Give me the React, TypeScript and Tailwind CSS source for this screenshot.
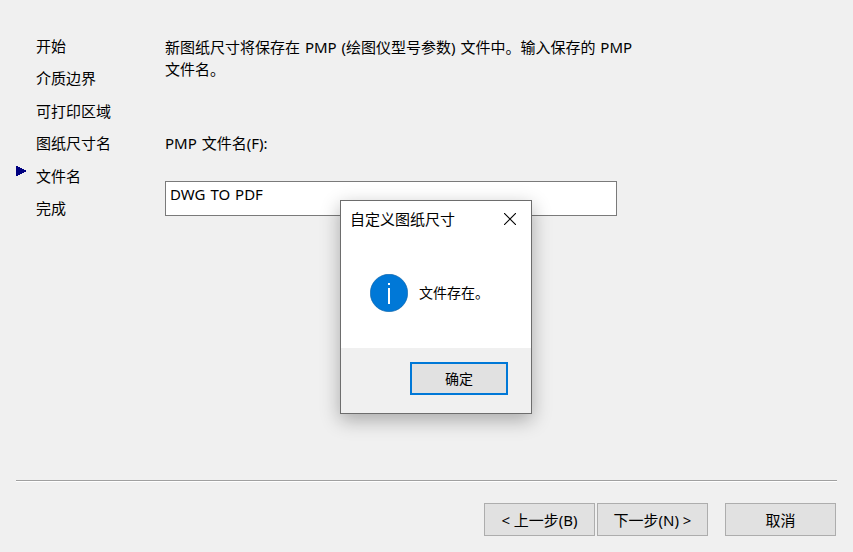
import React from "react";

const steps = ["开始", "介质边界", "可打印区域", "图纸尺寸名", "文件名", "完成"];

const font = "font-['Noto_Sans','Noto_Sans_CJK_SC',sans-serif]";

function WizardButton({ children, className }: { children: React.ReactNode; className: string }) {
  return (
    <button className={`h-[33px] border border-[#adadad] bg-[#e1e1e1] text-[15px] leading-[28px] text-black ${className}`}>
      {children}
    </button>
  );
}

export default function App() {
  return (
    <div className={`relative flex h-[552px] w-[853px] flex-col overflow-hidden bg-[#f0f0f0] text-black [word-spacing:1px] ${font}`}>
      <div className="flex h-[480px] shrink-0">
        {/* Steps */}
        <div className="flex w-[165px] shrink-0 flex-col pl-4 pt-[30px]">
          {steps.map((step) => (
            <div key={step} className="flex h-[32.4px] items-center text-[15px]">
              <div className="w-5 shrink-0">
                {step === "文件名" && (
                  <svg width="10" height="11" viewBox="0 0 10 11" className="-mt-2">
                    <path d="M0 0 H2 V1 H4 V2 H6 V3 H8 V4 H10 V6 H8 V7 H6 V8 H4 V9 H2 V10 H0 Z" fill="#000080" />
                  </svg>
                )}
              </div>
              <span>{step}</span>
            </div>
          ))}
        </div>

        {/* Filename form */}
        <div className="flex flex-col pt-[36px]">
          <p className="w-[480px] text-[15px] leading-[22px]">
            新图纸尺寸将保存在 PMP (绘图仪型号参数) 文件中。输入保存的 PMP 文件名。
          </p>
          <label className="mt-[52px] text-[15px] leading-[22px]">PMP 文件名(F):</label>
          <div className="mt-[27px] h-[35px] w-[452px] border border-[#7a7a7a] bg-white pl-1 text-[15px] leading-[25px]">
            DWG TO PDF
          </div>
        </div>
      </div>

      {/* Separator */}
      <div className="mx-4 h-0.5 shrink-0 border-t border-b border-t-[#a0a0a0] border-b-white" />

      {/* Footer buttons */}
      <div className="flex justify-end pr-[17px] pt-[21px]">
        <WizardButton className="w-[111px]">&lt; 上一步(B)</WizardButton>
        <WizardButton className="ml-0.5 w-[111px]">下一步(N) &gt;</WizardButton>
        <WizardButton className="ml-[17px] w-[111px]">取消</WizardButton>
      </div>

      {/* Message box */}
      <div className="absolute left-[340px] top-[200px] flex h-[214px] w-[192px] flex-col border border-[#6d6d6d] bg-white shadow-[0_6px_18px_rgba(0,0,0,0.3)]">
        <div className="flex h-[36px] shrink-0 items-center justify-between pl-[9px] pr-[15px] text-[15px]">
          <span>自定义图纸尺寸</span>
          <svg width="12" height="12" viewBox="0 0 12 12">
            <path d="M0 0 L12 12 M12 0 L0 12" stroke="#000" strokeWidth="1.1" fill="none" />
          </svg>
        </div>
        <div className="flex flex-1 items-start pl-[29px] pt-[37px]">
          <svg width="38" height="38" viewBox="0 0 38 38" className="shrink-0">
            <circle cx="19" cy="19" r="18.7" fill="#0078d7" stroke="#0a5fa5" strokeWidth="0.6" />
            <rect x="18" y="9" width="2" height="2" fill="#fff" />
            <rect x="18" y="14" width="2" height="16" fill="#fff" />
          </svg>
          <span className="ml-[11px] mt-[8px] text-[14px] leading-[22px]">文件存在。</span>
        </div>
        <div className="flex h-[65px] shrink-0 justify-end bg-[#f0f0f0] pr-[23px] pt-3.5">
          <button className="h-[33px] w-[98px] border-2 border-[#0078d7] bg-[#e1e1e1] text-[14px] leading-[26px]">
            确定
          </button>
        </div>
      </div>
    </div>
  );
}
